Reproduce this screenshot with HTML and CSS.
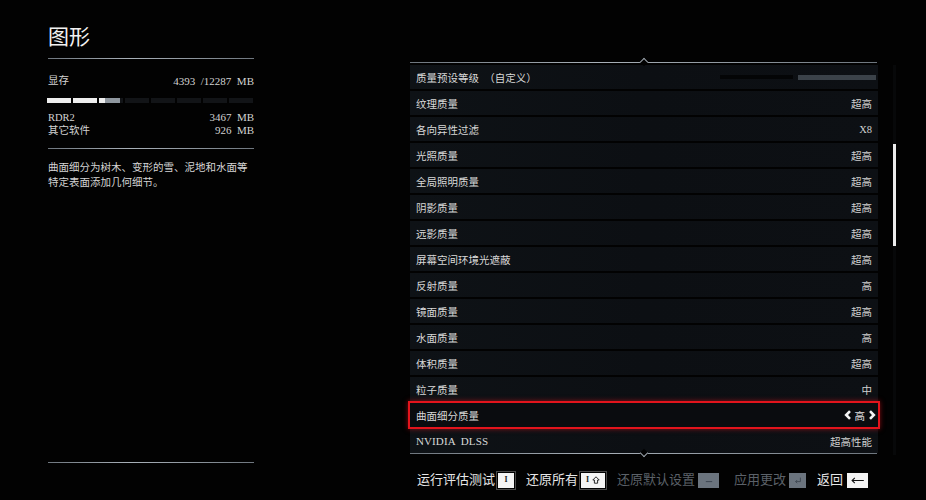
FILE: index.html
```html
<!DOCTYPE html>
<html lang="zh-CN">
<head>
<meta charset="utf-8">
<title>图形</title>
<link rel="stylesheet" href="styles.css">
</head>
<body>
<div class="screen">
  <aside class="left">
    <h1 class="title">图形</h1>
    <div class="rule"></div>
    <div class="mem-row first"><span>显存</span><span class="num">4393  /12287  MB</span></div>
    <div class="membar">
      <span class="seg full"></span><span class="seg full"></span><span class="seg part"></span><span class="seg"></span>
      <span class="seg"></span><span class="seg"></span><span class="seg"></span><span class="seg"></span>
    </div>
    <div class="mem-list">
      <div class="mem-row"><span>RDR2</span><span class="num">3467  MB</span></div>
      <div class="mem-row"><span>其它软件</span><span class="num">926  MB</span></div>
    </div>
    <div class="rule"></div>
    <p class="desc">曲面细分为树木、变形的雪、泥地和水面等<br>特定表面添加几何细节。</p>
    <div class="rule bottom"></div>
  </aside>

  <main class="right">
    <div class="list-wrap">
      <div class="list-col">
        <div class="rule wide caret-up"></div>
        <div class="rows">
          <div class="row"><span class="label">质量预设等级　（自定义）</span><span class="slider"><span class="track"></span><span class="fill"></span></span></div>
          <div class="row"><span class="label">纹理质量</span><span class="val">超高</span></div>
          <div class="row"><span class="label">各向异性过滤</span><span class="val">X8</span></div>
          <div class="row"><span class="label">光照质量</span><span class="val">超高</span></div>
          <div class="row"><span class="label">全局照明质量</span><span class="val">超高</span></div>
          <div class="row"><span class="label">阴影质量</span><span class="val">超高</span></div>
          <div class="row"><span class="label">远影质量</span><span class="val">超高</span></div>
          <div class="row"><span class="label">屏幕空间环境光遮蔽</span><span class="val">超高</span></div>
          <div class="row"><span class="label">反射质量</span><span class="val">高</span></div>
          <div class="row"><span class="label">镜面质量</span><span class="val">超高</span></div>
          <div class="row"><span class="label">水面质量</span><span class="val">高</span></div>
          <div class="row"><span class="label">体积质量</span><span class="val">超高</span></div>
          <div class="row"><span class="label">粒子质量</span><span class="val">中</span></div>
          <div class="row selected"><span class="label">曲面细分质量</span><span class="val picker"><svg class="chev" viewBox="0 0 8 10" width="8" height="10"><path d="M6 1.2 L2.2 5 L6 8.8" fill="none" stroke="#f4f4f4" stroke-width="2.6"/></svg><span>高</span><svg class="chev" viewBox="0 0 8 10" width="8" height="10"><path d="M2 1.2 L5.8 5 L2 8.8" fill="none" stroke="#f4f4f4" stroke-width="2.6"/></svg></span></div>
          <div class="row"><span class="label latin">NVIDIA  DLSS</span><span class="val">超高性能</span></div>
        </div>
        <div class="rule wide caret-down"></div>
      </div>
      <div class="scroll"><div class="thumb"></div></div>
    </div>

    <div class="actions">
      <span class="act">运行评估测试</span>
      <span class="key k1"><span class="kglyph">I</span></span>
      <span class="act">还原所有</span>
      <span class="key k2"><span class="kglyph">I</span><svg viewBox="0 0 10 10" width="8" height="8"><path d="M5 1 L9 5 L7 5 L7 9 L3 9 L3 5 L1 5 Z" fill="none" stroke="#222" stroke-width="1.2"/></svg></span>
      <span class="act dim">还原默认设置</span>
      <span class="key k3 grey"><svg viewBox="0 0 12 10" width="10" height="8"><path d="M2 7 L10 7" stroke="#3c4550" stroke-width="1.2"/></svg></span>
      <span class="act dim">应用更改</span>
      <span class="key k4 grey"><svg viewBox="0 0 10 10" width="8" height="8"><path d="M8 2 L8 7 L2 7 M4 5 L2 7 L4 9" fill="none" stroke="#3c4550" stroke-width="1.1"/></svg></span>
      <span class="act">返回</span>
      <span class="key k5"><svg viewBox="0 0 16 10" width="15" height="9"><path d="M15 5 L2 5 M5 2 L2 5 L5 8" fill="none" stroke="#111" stroke-width="1.2"/></svg></span>
    </div>
  </main>
</div>
</body>
</html>
```

FILE: styles.css
```css
* { box-sizing: border-box; }

html, body {
  margin: 0;
  padding: 0;
  background: #020202;
}

body {
  width: 926px;
  height: 500px;
  overflow: hidden;
  font-family: "Liberation Serif", "Noto Sans CJK SC", serif;
  color: #d6d6d6;
}

.screen {
  display: flex;
  height: 500px;
}

/* ---------- left panel ---------- */
.left {
  width: 206px;
  margin-left: 48px;
  padding-top: 25px;
  display: flex;
  flex-direction: column;
  height: 500px;
}

.title {
  margin: 0;
  font-size: 21px;
  line-height: 24px;
  font-weight: 400;
  color: #f2f2f2;
}

.rule {
  height: 1px;
  background: linear-gradient(90deg, #6e767e 0%, #a8b0b8 40%, #8d959d 70%, #6e767e 100%);
}

.left .title + .rule { margin-top: 9px; }

.mem-row {
  display: flex;
  justify-content: space-between;
  font-size: 10.5px;
  line-height: 13px;
  color: #d2d2d2;
}

.mem-row .num { white-space: pre; font-size: 11px; }

.mem-row.first {
  margin-top: 15px;
  line-height: 14px;
}

.membar {
  display: flex;
  gap: 2px;
  margin-top: 10px;
  height: 5px;
  margin-left: -1px;
}

.seg {
  width: 24px;
  height: 5px;
  background: #121417;
}
.seg.full { background: #eeeeee; }
.seg.part {
  background: linear-gradient(90deg, #eeeeee 0 6px, #8f979f 6px 21px, #121417 21px);
}

.mem-list {
  margin-top: 8px;
  margin-bottom: 11px;
}

.desc {
  margin: 11px 0 0 0;
  font-size: 10.5px;
  line-height: 15px;
  color: #d4d4d4;
}

.rule.bottom {
  margin-top: auto;
  margin-bottom: 37px;
}

/* ---------- right panel ---------- */
.right {
  margin-left: 156px;
  padding-top: 62px;
  display: flex;
  flex-direction: column;
}

.list-wrap {
  display: flex;
}

.list-col {
  width: 468px;
}

.rule.wide {
  width: 467px;
  position: relative;
}

.caret-up::after,
.caret-down::after {
  content: "";
  position: absolute;
  left: 231px;
  width: 5px;
  height: 5px;
  border-left: 1px solid #9aa2aa;
  border-top: 1px solid #9aa2aa;
  transform: rotate(45deg);
  background: #020202;
}
.caret-up::after { top: -3px; }
.caret-down::after { top: -3px; transform: rotate(225deg); }

.rows {
  margin-top: 2px;
  display: flex;
  flex-direction: column;
  gap: 2px;
}

.row {
  height: 24px;
  display: flex;
  align-items: center;
  justify-content: space-between;
  padding: 0 6px;
  background: linear-gradient(90deg, #0e1216 0%, #0c0f13 50%, #0d1014 100%);
  font-size: 10.5px;
  color: #d8d8d8;
}

.label { white-space: pre; }
.label.latin { font-size: 11px; letter-spacing: 0.1px; }

.val {
  color: #d0d0d0;
  font-size: 10.5px;
}

.slider {
  display: flex;
  align-items: center;
  gap: 5px;
  margin-right: -4px;
}
.slider .track {
  width: 73px;
  height: 4px;
  background: #040506;
}
.slider .fill {
  width: 78px;
  height: 5px;
  background: #3b4249;
}

.row.selected {
  position: relative;
  box-shadow: 0 0 0 2px #e3141c, 0 0 5px 2px rgba(230, 20, 28, 0.55);
  background: #0a0c0f;
  z-index: 1;
}

.picker {
  display: flex;
  align-items: center;
  gap: 3px;
  color: #e0e0e0;
  margin-right: -4px;
}

/* scrollbar */
.scroll {
  margin-left: 15px;
  margin-top: 3px;
  width: 3px;
  height: 390px;
  background: #070809;
}
.thumb {
  margin-top: 79px;
  width: 3px;
  height: 102px;
  background: #ececec;
}

/* ---------- action bar ---------- */
.actions {
  display: flex;
  align-items: center;
  margin-top: 15px;
  padding-left: 7px;
  height: 20px;
  font-size: 13px;
  color: #e6e6e6;
}

.act { line-height: 20px; }
.act.dim { color: #5b6168; }

.key {
  display: inline-flex;
  align-items: center;
  justify-content: center;
  gap: 3px;
  height: 15px;
  margin-left: 3px;
  margin-right: 12px;
  background: #f4f4f4;
  outline: 1px solid #4a4a4a;
  outline-offset: 1px;
}
.kglyph {
  font-family: "Liberation Serif", serif;
  font-size: 8px;
  font-weight: 700;
  color: #222;
  line-height: 8px;
}
.k1 { width: 16px; }
.k2 { width: 24px; }
.k3 { width: 21px; margin-right: 15px; }
.k4 { width: 17px; margin-right: 11px; }
.k5 { width: 21px; margin-left: 4px; outline: none; }
.key.grey {
  background: #6b747e;
  outline: none;
}
```
